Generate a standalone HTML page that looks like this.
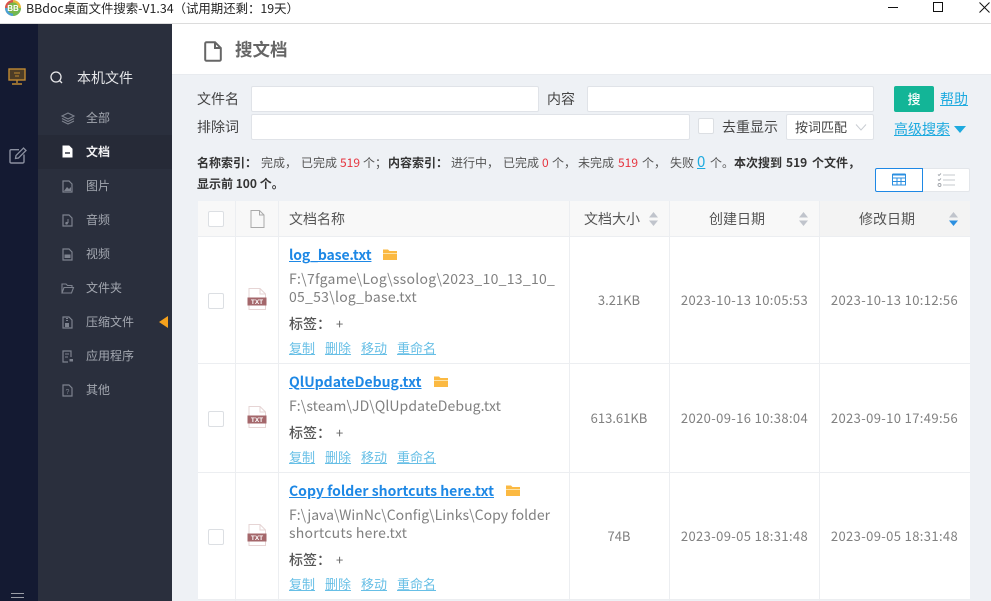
<!DOCTYPE html>
<html><head><meta charset="utf-8">
<style>
*{box-sizing:border-box}
html,body{margin:0;padding:0;width:991px;height:601px;overflow:hidden;background:#eef1f5}
body{position:relative;font-family:"Noto Sans CJK SC","Liberation Sans",sans-serif;font-size:13px;color:#555}
.a,.t{position:absolute}
.t{white-space:nowrap;line-height:18px}
svg{position:absolute;overflow:visible}
.nav{color:#a3a7b0;font-size:12px}
.inp{position:absolute;background:#fff;border:1px solid #e0e3e8;border-radius:2px}
.cb{position:absolute;width:16px;height:16px;background:#fff;border:1px solid #dcdfe3;border-radius:2px}
.lb{color:#444;font-size:14px}
.v{position:absolute;width:1px;background:#eceef1}
.h{position:absolute;height:1px;background:#eceef1;left:198px;width:772px}
.name{color:#1e88e5;font-weight:700;text-decoration:underline;font-size:14px}
.path{color:#808080;font-size:14px}
.tag{color:#555;font-weight:500;font-size:14px}
.act{color:#67bfe6;text-decoration:underline;font-size:13px}
.d{color:#808080;font-size:13px;letter-spacing:.37px;text-align:center}
.z{color:#808080;font-size:13px;text-align:center}
.hd{color:#555;font-size:14px}
.s{font-size:12px;color:#555}
.b{color:#333;font-weight:700}
.r{color:#e6343f}
</style></head><body>

<div class="a" style="left:0;top:0;width:991px;height:24px;background:#fff;border-bottom:1px solid #dcdcdc"></div>
<svg style="left:5px;top:0" width="16" height="16" viewBox="0 0 16 16"><circle cx="8" cy="8" r="8" fill="#e8b93a"/><path d="M8 8L0 8A8 8 0 0 1 8 0Z" fill="#d9534f"/><path d="M8 8L0 8A8 8 0 0 0 8 16Z" fill="#4a9fd8"/><path d="M8 8L16 8A8 8 0 0 1 8 16Z" fill="#6cb85a"/><circle cx="8" cy="8" r="5.6" fill="#7ab648"/><text x="8" y="11" font-size="8" font-weight="700" fill="#fff" text-anchor="middle" font-family="Liberation Sans">BB</text></svg>
<div class="t" style="left:26px;top:-2px;color:#222;font-size:12.4px;line-height:20px">BBdoc桌面文件搜索-V1.34（试用期还剩：19天）</div>
<div class="a" style="left:888px;top:7px;width:10px;height:1px;background:#111"></div>
<div class="a" style="left:933px;top:2px;width:10px;height:10px;border:1px solid #111"></div>
<svg style="left:979px;top:2px" width="11" height="11" viewBox="0 0 11 11"><path d="M.5 .5L10.5 10.5M10.5 .5L.5 10.5" stroke="#111" stroke-width="1" fill="none"/></svg>

<div class="a" style="left:0;top:24px;width:38px;height:577px;background:#141a32"></div>
<div class="a" style="left:38px;top:24px;width:134px;height:577px;background:#2a2f3d"></div>
<div class="a" style="left:38px;top:135px;width:134px;height:34px;background:#262a37"></div>

<svg style="left:8px;top:68px" width="18" height="17" viewBox="0 0 18 17"><rect x="1" y="1" width="16" height="11" fill="#4d3d26" stroke="#c08a33" stroke-width="1.4"/><path d="M6 5h6M7 8h4" stroke="#c08a33" stroke-width="1"/><path d="M9 12v3M4 16h10" stroke="#c08a33" stroke-width="1.4" fill="none"/></svg>
<svg style="left:9px;top:147px" width="18" height="17" viewBox="0 0 18 17"><path d="M10 2.7H2.2A1.2 1.2 0 0 0 1 3.9V14.8A1.2 1.2 0 0 0 2.2 16H13.8A1.2 1.2 0 0 0 15 14.8V7.5" stroke="#8b90a0" stroke-width="1.4" fill="none"/><path d="M6.5 11.5L7 8.5L14.5 1L17 3.5L9.5 11Z" stroke="#8b90a0" stroke-width="1.3" fill="none"/></svg>
<div class="a" style="left:11px;top:593px;width:13px;height:1px;background:#9a9da6"></div>
<div class="a" style="left:11px;top:597px;width:13px;height:1px;background:#9a9da6"></div>

<svg style="left:50px;top:71px" width="13" height="13" viewBox="0 0 13 13"><circle cx="6" cy="6" r="5" stroke="#e8e8ea" stroke-width="1.3" fill="none"/><path d="M9.5 9.5L12 12" stroke="#e8e8ea" stroke-width="1.3"/></svg>
<div class="t" style="left:77px;top:69px;color:#e4e5e8;font-size:14px">本机文件</div>

<svg style="left:61px;top:112px" width="14" height="13" viewBox="0 0 14 13"><path d="M7 1L13 4L7 7L1 4ZM1 6.5L7 9.5L13 6.5M1 9L7 12L13 9" stroke="#7d828e" stroke-width="1.1" fill="none"/></svg>
<div class="t nav" style="left:86px;top:109px">全部</div>
<svg style="left:62px;top:145px" width="11" height="13" viewBox="0 0 11 13"><path d="M1 1H7L10 4V12H1Z" fill="#fff" stroke="#fff"/><path d="M3 8H8" stroke="#262a37" stroke-width="1.4"/></svg>
<div class="t" style="left:86px;top:143px;color:#f2f2f4;font-size:12px;font-weight:700">文档</div>
<svg style="left:62px;top:180px" width="11" height="13" viewBox="0 0 11 13"><path d="M1 1H7L10 4V12H1Z" fill="none" stroke="#7d828e" stroke-width="1.2"/><path d="M2 11L5 7L7 9L9 7V11Z" fill="#7d828e"/></svg>
<div class="t nav" style="left:86px;top:177px">图片</div>
<svg style="left:62px;top:214px" width="11" height="13" viewBox="0 0 11 13"><path d="M1 1H7L10 4V12H1Z" fill="none" stroke="#7d828e" stroke-width="1.2"/><path d="M6 5V9" stroke="#7d828e"/><circle cx="4.6" cy="9.2" r="1.3" fill="#7d828e"/></svg>
<div class="t nav" style="left:86px;top:211px">音频</div>
<svg style="left:62px;top:248px" width="11" height="13" viewBox="0 0 11 13"><path d="M1 1H7L10 4V12H1Z" fill="none" stroke="#7d828e" stroke-width="1.2"/><rect x="2.5" y="6.5" width="6" height="3.5" fill="#7d828e"/></svg>
<div class="t nav" style="left:86px;top:245px">视频</div>
<svg style="left:61px;top:283px" width="13" height="11" viewBox="0 0 13 11"><path d="M1 10V1H5L6.5 2.5H11V4.5M1 10H10.5L12.5 4.5H3L1 10Z" fill="none" stroke="#7d828e" stroke-width="1.1"/></svg>
<div class="t nav" style="left:86px;top:279px">文件夹</div>
<svg style="left:62px;top:316px" width="11" height="13" viewBox="0 0 11 13"><path d="M1 1H7L10 4V12H1Z" fill="none" stroke="#7d828e" stroke-width="1.2"/><path d="M4 2h2v1H4zM4 4h2v1H4zM3 7h4v4H3z" fill="#7d828e"/></svg>
<div class="t nav" style="left:86px;top:313px">压缩文件</div>
<div class="a" style="left:159px;top:316px;width:0;height:0;border-top:6.5px solid transparent;border-bottom:6.5px solid transparent;border-right:9px solid #f5a11c"></div>
<svg style="left:62px;top:350px" width="12" height="13" viewBox="0 0 12 13"><path d="M9 7V1H1V12H6" fill="none" stroke="#7d828e" stroke-width="1.2"/><path d="M3 4H7M3 7H6" stroke="#7d828e"/><rect x="7.5" y="9" width="3.5" height="2.5" fill="#7d828e"/></svg>
<div class="t nav" style="left:86px;top:347px">应用程序</div>
<svg style="left:62px;top:384px" width="11" height="13" viewBox="0 0 11 13"><path d="M1 1H7L10 4V12H1Z" fill="none" stroke="#7d828e" stroke-width="1.2"/><text x="5.5" y="10" font-size="7" fill="#7d828e" text-anchor="middle" font-family="Liberation Sans">?</text></svg>
<div class="t nav" style="left:86px;top:381px">其他</div>

<div class="a" style="left:172px;top:24px;width:819px;height:51px;background:#fff;border-bottom:1px solid #e8ebef"></div>
<svg style="left:204px;top:41px" width="18" height="21" viewBox="0 0 18 21"><path d="M2.5 1.2H11L16.8 7V18.5A1.3 1.3 0 0 1 15.5 19.8H2.5A1.3 1.3 0 0 1 1.2 18.5V2.5A1.3 1.3 0 0 1 2.5 1.2ZM11 1.2V7H16.8" fill="none" stroke="#666" stroke-width="2"/></svg>
<div class="t" style="left:235px;top:39px;color:#666;font-size:17.5px;font-weight:700;line-height:22px">搜文档</div>

<div class="t lb" style="left:197px;top:90px">文件名</div>
<div class="inp" style="left:251px;top:86px;width:288px;height:26px"></div>
<div class="t lb" style="left:547px;top:90px">内容</div>
<div class="inp" style="left:587px;top:86px;width:287px;height:26px"></div>
<div class="t lb" style="left:197px;top:118px">排除词</div>
<div class="inp" style="left:251px;top:114px;width:439px;height:26px"></div>
<div class="cb" style="left:698px;top:118px"></div>
<div class="t lb" style="left:722px;top:118px">去重显示</div>
<div class="inp" style="left:786px;top:114px;width:88px;height:26px"></div>
<div class="t" style="left:795px;top:118px;color:#444;font-size:13px">按词匹配</div>
<svg style="left:855px;top:124px" width="12" height="7" viewBox="0 0 12 7"><path d="M1 .5L6 6L11 .5" fill="none" stroke="#c8ccd2" stroke-width="1"/></svg>
<div class="a" style="left:894px;top:86px;width:40px;height:26px;background:#13b597;border-radius:2px;color:#fff;text-align:center;font-size:13px;font-weight:500;line-height:25px">搜</div>
<div class="t" style="left:940px;top:90px;color:#1eaadf;text-decoration:underline;font-size:14px">帮助</div>
<div class="t" style="left:894px;top:120px;color:#1eaadf;text-decoration:underline;font-size:14px">高级搜索</div>
<div class="a" style="left:954px;top:126px;width:0;height:0;border-left:6.5px solid transparent;border-right:6.5px solid transparent;border-top:7px solid #1eaadf"></div>

<div class="t s b" style="left:197px;top:154px">名称索引：</div>
<div class="t s" style="left:261px;top:154px">完成，</div>
<div class="t s" style="left:301px;top:154px">已完成</div>
<div class="t s r" style="left:340px;top:154px">519</div>
<div class="t s" style="left:363px;top:154px">个；</div>
<div class="t s b" style="left:388px;top:154px">内容索引：</div>
<div class="t s" style="left:451px;top:154px">进行中，</div>
<div class="t s" style="left:503px;top:154px">已完成</div>
<div class="t s r" style="left:542px;top:154px">0</div>
<div class="t s" style="left:552px;top:154px">个，</div>
<div class="t s" style="left:578px;top:154px">未完成</div>
<div class="t s r" style="left:618px;top:154px">519</div>
<div class="t s" style="left:642px;top:154px">个，</div>
<div class="t s" style="left:670px;top:154px">失败</div>
<div class="t" style="left:697px;top:153px;color:#1eaadf;text-decoration:underline;font-size:15px">0</div>
<div class="t s" style="left:710px;top:154px">个。</div>
<div class="t s b" style="left:734px;top:154px">本次搜到</div>
<div class="t s b" style="left:786px;top:154px">519</div>
<div class="t s b" style="left:812px;top:154px">个文件，</div>
<div class="t s b" style="left:197px;top:175px">显示前 100 个。</div>

<div class="a" style="left:875px;top:168px;width:48px;height:24px;background:#fff;border:1px solid #1e88e5;border-radius:2px 0 0 2px"></div>
<div class="a" style="left:923px;top:168px;width:47px;height:24px;background:#fff;border:1px solid #e3e6ea;border-left:0;border-radius:0 2px 2px 0"></div>
<svg style="left:892px;top:173px" width="14" height="13" viewBox="0 0 14 13"><path d="M.5 1.5H13.5V12H.5ZM.5 5H13.5M.5 8.5H13.5M5 5V12M9 5V12" fill="none" stroke="#2b8fe0" stroke-width="1"/><path d="M.5 1.5H13.5" stroke="#2b8fe0" stroke-width="2"/></svg>
<svg style="left:937px;top:173px" width="18" height="14" viewBox="0 0 18 14"><path d="M6 2H18M6 7H18M6 12H18" stroke="#c5c8cd" stroke-width="1"/><path d="M1 1.5L2 2.5L4 .5M1 6.5L2 7.5L4 5.5" fill="none" stroke="#a0a4aa" stroke-width=".9"/><circle cx="2.5" cy="12" r="1.5" fill="none" stroke="#a0a4aa" stroke-width=".9"/></svg>

<div class="a" style="left:198px;top:201px;width:772px;height:36px;background:#f8f8f8"></div>
<div class="a" style="left:820px;top:201px;width:150px;height:36px;background:#f3f3f3"></div>
<div class="a" style="left:198px;top:237px;width:772px;height:363px;background:#fff"></div>
<div class="h" style="top:236px"></div>
<div class="h" style="top:363px"></div>
<div class="h" style="top:472px"></div>
<div class="h" style="top:599px"></div>
<div class="v" style="left:235px;top:201px;height:400px"></div>
<div class="v" style="left:278px;top:201px;height:400px"></div>
<div class="v" style="left:569px;top:201px;height:400px"></div>
<div class="v" style="left:669px;top:201px;height:400px"></div>
<div class="v" style="left:819px;top:201px;height:400px"></div>

<div class="cb" style="left:208px;top:211px"></div>
<svg style="left:250px;top:210px" width="15" height="18" viewBox="0 0 15 18"><path d="M1 .5H9.5L14 5V17.5H1ZM9.5 .5V5H14" fill="none" stroke="#aaa" stroke-width="1"/></svg>
<div class="t hd" style="left:289px;top:210px">文档名称</div>
<div class="t hd" style="left:584px;top:210px">文档大小</div>
<div class="t hd" style="left:709px;top:210px">创建日期</div>
<div class="t hd" style="left:859px;top:210px">修改日期</div>

<svg style="left:649px;top:212px" width="9" height="14" viewBox="0 0 9 14"><path d="M4.5 0L9 5.5H0ZM0 8.5H9L4.5 14Z" fill="#c0c4cc"/></svg>
<svg style="left:799px;top:212px" width="9" height="14" viewBox="0 0 9 14"><path d="M4.5 0L9 5.5H0ZM0 8.5H9L4.5 14Z" fill="#c0c4cc"/></svg>
<svg style="left:949px;top:212px" width="9" height="14" viewBox="0 0 9 14"><path d="M4.5 0L9 5.5H0Z" fill="#c0c4cc"/><path d="M0 8.5H9L4.5 14Z" fill="#2b8fe0"/></svg>

<!-- row 1 -->
<div class="cb" style="left:208px;top:293px"></div>
<svg style="left:247px;top:288px" width="20" height="23" viewBox="0 0 20 23"><path d="M2 .5H13L18.5 6V21.5H2ZM13 .5V6H18.5" fill="#fff" stroke="#e6d5d5" stroke-width="1"/><rect x=".5" y="9.5" width="19" height="8" fill="#a4676b"/><text x="10" y="16" font-size="6.5" font-weight="700" fill="#fff" text-anchor="middle" font-family="Liberation Sans">TXT</text></svg>
<div class="t name" style="left:289px;top:246px;letter-spacing:-.15px">log_base.txt</div>
<svg style="left:382px;top:248px" width="16" height="13" viewBox="0 0 16 13"><path d="M1 1.5H6L7.5 3H15V12H1Z" fill="#fbb942"/><path d="M1 5.5H15" stroke="#fde3a8" stroke-width="1"/></svg>
<div class="t path" style="left:289px;top:270px;letter-spacing:.28px">F:\7fgame\Log\ssolog\2023_10_13_10_</div>
<div class="t path" style="left:289px;top:288px;letter-spacing:.26px">05_53\log_base.txt</div>
<div class="t tag" style="left:289px;top:315px">标签：</div>
<div class="t" style="left:336px;top:315px;color:#666">+</div>
<div class="t act" style="left:289px;top:339px">复制</div>
<div class="t act" style="left:325px;top:339px">删除</div>
<div class="t act" style="left:361px;top:339px">移动</div>
<div class="t act" style="left:397px;top:339px">重命名</div>
<div class="t z" style="left:570px;top:291px;width:98px">3.21KB</div>
<div class="t d" style="left:670px;top:291px;width:149px">2023-10-13 10:05:53</div>
<div class="t d" style="left:820px;top:291px;width:149px">2023-10-13 10:12:56</div>

<!-- row 2 -->
<div class="cb" style="left:208px;top:411px"></div>
<svg style="left:247px;top:406px" width="20" height="23" viewBox="0 0 20 23"><path d="M2 .5H13L18.5 6V21.5H2ZM13 .5V6H18.5" fill="#fff" stroke="#e6d5d5" stroke-width="1"/><rect x=".5" y="9.5" width="19" height="8" fill="#a4676b"/><text x="10" y="16" font-size="6.5" font-weight="700" fill="#fff" text-anchor="middle" font-family="Liberation Sans">TXT</text></svg>
<div class="t name" style="left:289px;top:373px">QlUpdateDebug.txt</div>
<svg style="left:433px;top:375px" width="16" height="13" viewBox="0 0 16 13"><path d="M1 1.5H6L7.5 3H15V12H1Z" fill="#fbb942"/><path d="M1 5.5H15" stroke="#fde3a8" stroke-width="1"/></svg>
<div class="t path" style="left:289px;top:397px;letter-spacing:.08px">F:\steam\JD\QlUpdateDebug.txt</div>
<div class="t tag" style="left:289px;top:424px">标签：</div>
<div class="t" style="left:336px;top:424px;color:#666">+</div>
<div class="t act" style="left:289px;top:448px">复制</div>
<div class="t act" style="left:325px;top:448px">删除</div>
<div class="t act" style="left:361px;top:448px">移动</div>
<div class="t act" style="left:397px;top:448px">重命名</div>
<div class="t z" style="left:570px;top:409px;width:98px">613.61KB</div>
<div class="t d" style="left:670px;top:409px;width:149px">2020-09-16 10:38:04</div>
<div class="t d" style="left:820px;top:409px;width:149px">2023-09-10 17:49:56</div>

<!-- row 3 -->
<div class="cb" style="left:208px;top:529px"></div>
<svg style="left:247px;top:524px" width="20" height="23" viewBox="0 0 20 23"><path d="M2 .5H13L18.5 6V21.5H2ZM13 .5V6H18.5" fill="#fff" stroke="#e6d5d5" stroke-width="1"/><rect x=".5" y="9.5" width="19" height="8" fill="#a4676b"/><text x="10" y="16" font-size="6.5" font-weight="700" fill="#fff" text-anchor="middle" font-family="Liberation Sans">TXT</text></svg>
<div class="t name" style="left:289px;top:482px">Copy folder shortcuts here.txt</div>
<svg style="left:505px;top:484px" width="16" height="13" viewBox="0 0 16 13"><path d="M1 1.5H6L7.5 3H15V12H1Z" fill="#fbb942"/><path d="M1 5.5H15" stroke="#fde3a8" stroke-width="1"/></svg>
<div class="t path" style="left:289px;top:506px;letter-spacing:.03px">F:\java\WinNc\Config\Links\Copy folder</div>
<div class="t path" style="left:289px;top:524px;letter-spacing:.24px">shortcuts here.txt</div>
<div class="t tag" style="left:289px;top:551px">标签：</div>
<div class="t" style="left:336px;top:551px;color:#666">+</div>
<div class="t act" style="left:289px;top:575px">复制</div>
<div class="t act" style="left:325px;top:575px">删除</div>
<div class="t act" style="left:361px;top:575px">移动</div>
<div class="t act" style="left:397px;top:575px">重命名</div>
<div class="t z" style="left:570px;top:527px;width:98px">74B</div>
<div class="t d" style="left:670px;top:527px;width:149px">2023-09-05 18:31:48</div>
<div class="t d" style="left:820px;top:527px;width:149px">2023-09-05 18:31:48</div>

</body></html>
